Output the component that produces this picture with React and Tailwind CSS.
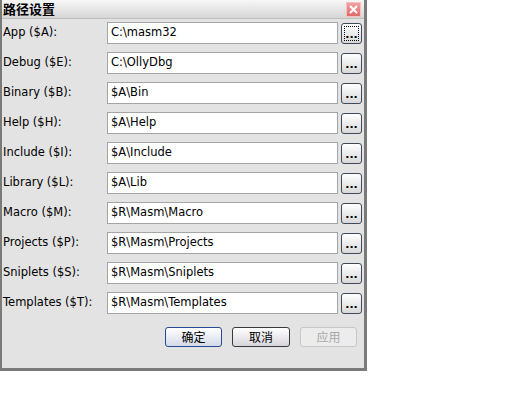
import React from "react";

const rows = [
  ["App ($A):", "C:\\masm32"],
  ["Debug ($E):", "C:\\OllyDbg"],
  ["Binary ($B):", "$A\\Bin"],
  ["Help ($H):", "$A\\Help"],
  ["Include ($I):", "$A\\Include"],
  ["Library ($L):", "$A\\Lib"],
  ["Macro ($M):", "$R\\Masm\\Macro"],
  ["Projects ($P):", "$R\\Masm\\Projects"],
  ["Sniplets ($S):", "$R\\Masm\\Sniplets"],
  ["Templates ($T):", "$R\\Masm\\Templates"],
];

function Dots({ focus }) {
  return (
    <div className="w-[21px] h-[21px] rounded-[3px] border border-[#3c4a5c] bg-gradient-to-b from-[#ffffff] to-[#d8d8d8] flex items-end justify-center relative">
      {focus && <div className="absolute inset-[2px] border border-dotted border-black" />}
      <span className="text-[11px] leading-[13px] font-bold text-black tracking-[0px] mb-[2px]">...</span>
    </div>
  );
}

export default function App() {
  return (
    <div className="w-[515px] h-[396px] bg-white" style={{ fontFamily: '"DejaVu Sans", "Noto Sans CJK SC", sans-serif' }}>
      <div className="w-[367px] h-[371px] border-l-[2px] border-r-[3px] border-b-[3px] border-[#7a7a7a] bg-[#e3e3e3] flex flex-col">
        <div className="h-[19px] bg-gradient-to-b from-[#f7f7f7] to-[#d6d6d6] flex items-center justify-between pl-[1px] pr-[3px] border-b border-[#bdbdbd]">
          <span className="text-[13px] font-bold text-black leading-[16px]" style={{ fontFamily: '"Noto Sans CJK SC", sans-serif' }}>路径设置</span>
          <div className="w-[15px] h-[15px] bg-gradient-to-b from-[#f3a0a0] to-[#e06a6a] flex items-center justify-center border border-[#f6c0c0]">
            <svg width="9" height="9" viewBox="0 0 9 9"><path d="M1 1 L8 8 M8 1 L1 8" stroke="white" strokeWidth="2" /></svg>
          </div>
        </div>
        <div className="flex flex-col gap-[8px] pt-[3px]">
          {rows.map(([l, v], i) => (
            <div key={i} className="flex items-start h-[22px]">
              <div className="w-[105px] pl-[1px] text-[11.5px] leading-[14px] text-black pt-[3px]">{l}</div>
              <div className="w-[231px] h-[22px] bg-white border border-[#a5a5a5] flex items-center pl-[3px] text-[11.5px] text-black">{v}</div>
              <div className="ml-[3px] mt-[1px]"><Dots focus={i === 0} /></div>
            </div>
          ))}
        </div>
        <div className="flex justify-end gap-[10px] pr-[7px] mt-[13px]">
          <div className="w-[57px] h-[20px] rounded-[3px] border border-[#264a94] bg-gradient-to-b from-[#ffffff] to-[#d4dae8] flex items-center justify-center text-[12px] text-black" style={{ fontFamily: '"Noto Sans CJK SC", sans-serif' }}>确定</div>
          <div className="w-[58px] h-[20px] rounded-[3px] border border-[#3a3a3a] bg-gradient-to-b from-[#ffffff] to-[#d6d6dc] flex items-center justify-center text-[12px] text-black" style={{ fontFamily: '"Noto Sans CJK SC", sans-serif' }}>取消</div>
          <div className="w-[57px] h-[20px] rounded-[3px] border border-[#c8c8c8] bg-[#ececec] flex items-center justify-center text-[12px] text-[#a8a8a8]" style={{ fontFamily: '"Noto Sans CJK SC", sans-serif' }}>应用</div>
        </div>
      </div>
    </div>
  );
}
